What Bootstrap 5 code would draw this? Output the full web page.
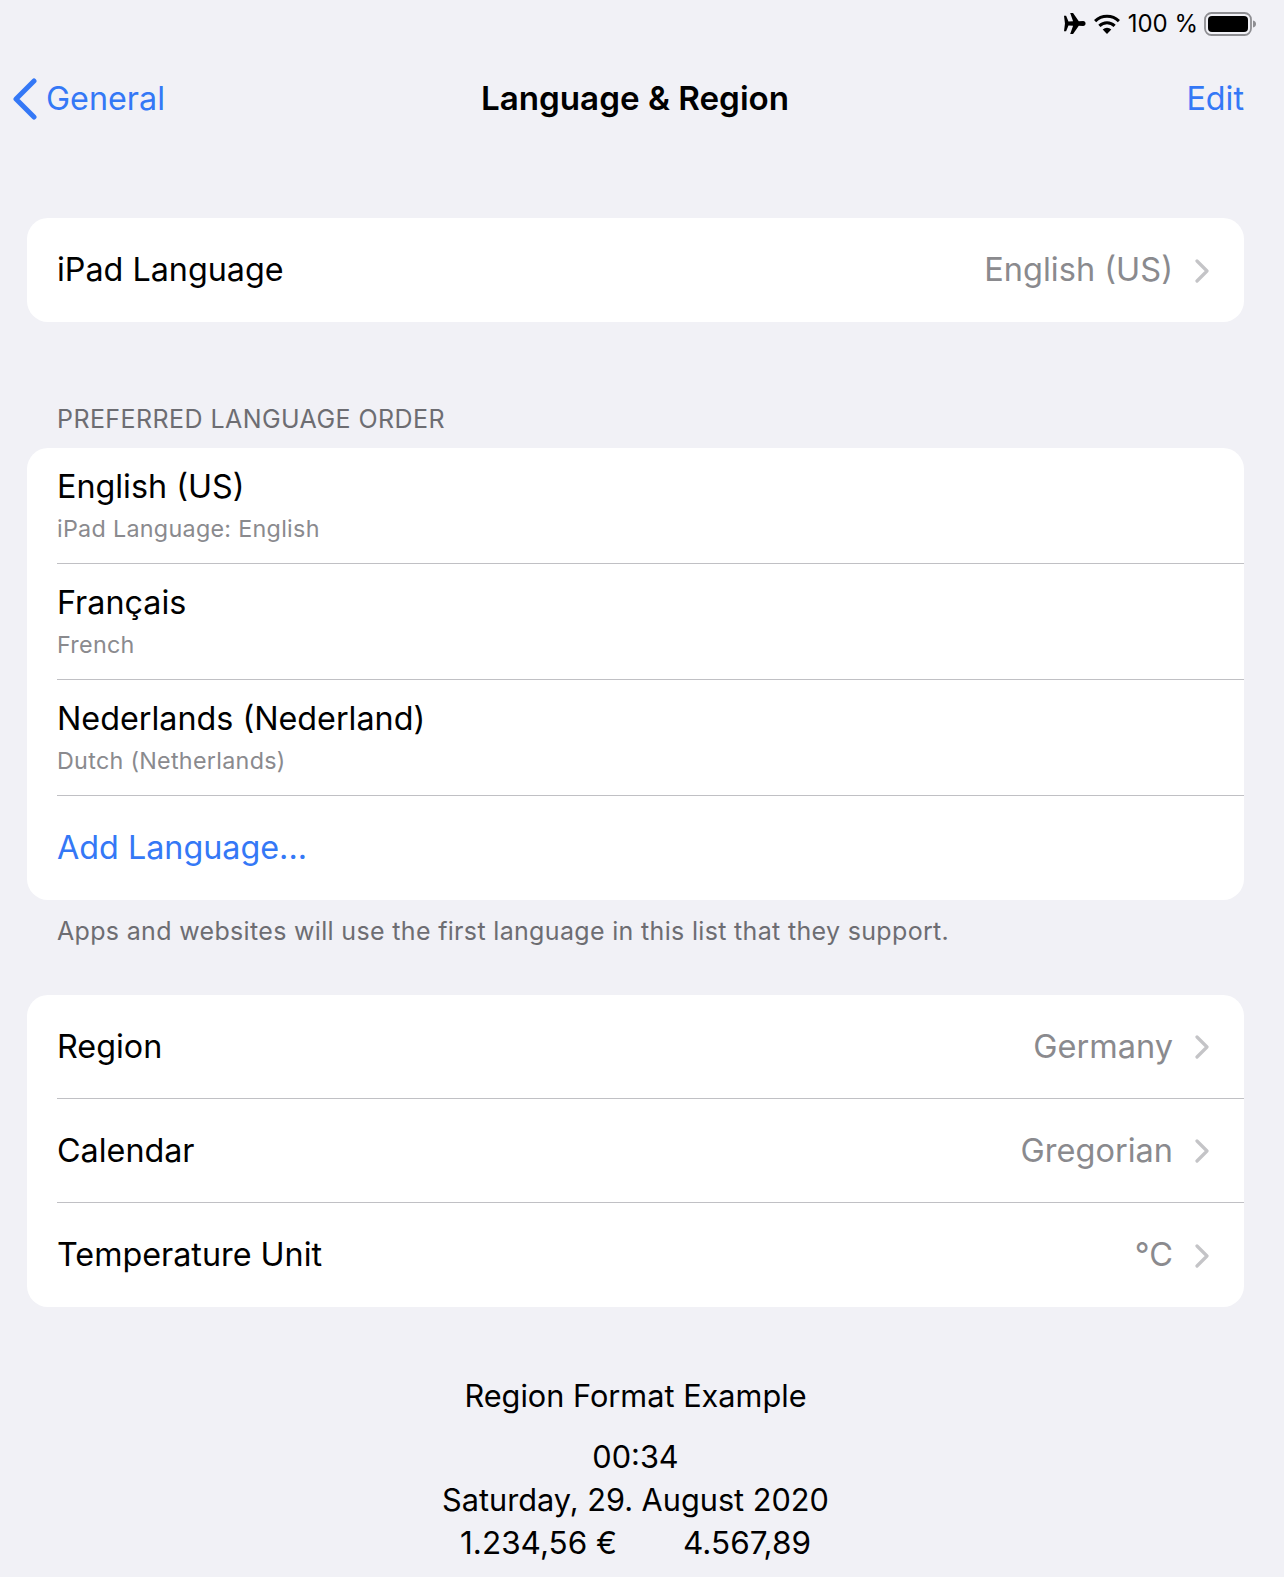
<!DOCTYPE html>
<html lang="en">

<head>
  <meta charset="UTF-8">
  <meta name="viewport" content="width=device-width, initial-scale=1.0">
  <title>Language &amp; Region</title>
  <link href="https://cdn.jsdelivr.net/npm/bootstrap@5.3.0/dist/css/bootstrap.min.css" rel="stylesheet">
  <style>
    html, body { height: 100%; }
    body { background: #f1f1f6; color: #000; font-family: Inter, "Liberation Sans", sans-serif; font-size: 32.3px; overflow: hidden; }
    .status-bar { height: 46px; padding: 1px 27px 0 0; font-size: 24px; line-height: 46px; gap: 7px; }
    .status-bar .batt-icon { margin-left: -1px; }
    .top-nav { height: 104px; padding: 2px 40px 0 12px; }
    .nav-left { width: 314px; }
    .nav-right { width: 300px; }
    .top-nav a, .blue-text { color: #3478f6; text-decoration: none; }
    .nav-title { font-weight: 600; font-size: 33.2px; }
    .back-link { gap: 9px; }
    .page-wrap { padding: 68px 40px 0 27px; }
    .group-box { background: #fff; border-radius: 21px; overflow: hidden; }
    .set-row { height: 104px; margin-left: 30px; padding: 1px 35px 0 0; }
    .set-row + .set-row, .lang-row + .lang-row, .lang-row + .add-row { border-top: 1px solid #c0c0c4; }
    .set-list .set-row:first-child { height: 103px; }
    .set-list .set-row:last-child { height: 105px; }
    .row-value { color: #8a8a8e; gap: 22px; font-size: 32.5px; }
    .lang-row { height: 116px; margin-left: 30px; padding-top: 17px; }
    .lang-row:first-child { height: 115px; }
    .lang-row .lang-sub { color: #8a8a8e; font-size: 23.3px; line-height: 30px; margin-top: 5px; letter-spacing: .3px; }
    .lang-row .lang-name { line-height: 44px; }
    .add-row { height: 105px; margin-left: 30px; }
    .group-label { color: #6d6d72; font-size: 25px; line-height: 30px; margin: 82px 0 14px 30px; letter-spacing: .43px; }
    .group-note { color: #6d6d72; font-size: 25px; line-height: 30px; margin: 16px 0 49px 30px; letter-spacing: .33px; }
    .format-box { margin-top: 67px; line-height: 43px; font-size: 30.7px; }
    .format-box .format-head { margin-bottom: 18px; }
    .format-nums { gap: 66px; font-size: 31.5px; }
  </style>
</head>

<body>
  <!-- status bar -->
  <div class="status-bar d-flex justify-content-end align-items-center">
    <svg width="23" height="21" viewBox="0 0 24 22"><path fill="#000" d="M1 3h2.200l2.500 5.800 4.800-.1L7.500 0h3l6 8.600 4.500-.1c1.600 0 2.600 1.100 2.600 2.500s-1 2.500-2.600 2.500l-4.500-.1-6 8.600h-3l3-8.700-4.800-.1L3.200 19H1l1-8z"/></svg>
    <svg width="28" height="20" viewBox="0 0 28 21"><g fill="none" stroke="#000" stroke-width="3.200"><path d="M1.500 7.500a18 18 0 0 1 25 0"/><path d="M6 12.500a11.500 11.500 0 0 1 16 0"/></g><path fill="#000" d="M9.500 16.200a6.500 6.500 0 0 1 9 0L14 21z"/></svg>
    <span>100 %</span>
    <svg class="batt-icon" width="53" height="24" viewBox="0 0 53 24"><rect x="1" y="1" width="46" height="22" rx="6.500" fill="none" stroke="#8e8e92" stroke-width="1.800"/><rect x="4" y="4" width="40" height="16" rx="4" fill="#000"/><path fill="#8e8e92" d="M49 8.500c2 .4 3 1.800 3 3.500s-1 3.100-3 3.500z"/></svg>
  </div>

  <!-- nav -->
  <nav class="top-nav d-flex justify-content-between align-items-center">
    <a href="#" class="nav-left back-link d-flex align-items-center">
      <svg width="25" height="42" viewBox="0 0 25 42"><path fill="none" stroke="#3478f6" stroke-width="5" stroke-linecap="round" stroke-linejoin="round" d="M22 3 4 21l18 18"/></svg>
      <span>General</span>
    </a>
    <div class="nav-title">Language &amp; Region</div>
    <div class="nav-right text-end"><a href="#">Edit</a></div>
  </nav>

  <div class="page-wrap">
    <div class="group-box">
      <div class="set-row d-flex justify-content-between align-items-center">
        <span>iPad Language</span>
        <span class="row-value d-flex align-items-center">English (US)
          <svg width="14" height="24" viewBox="0 0 14 24"><path fill="none" stroke="#c4c4c7" stroke-width="3.200" stroke-linecap="round" stroke-linejoin="round" d="m2 2 10 10L2 22"/></svg>
        </span>
      </div>
    </div>

    <div class="group-label">PREFERRED LANGUAGE ORDER</div>
    <div class="group-box">
      <div class="lang-row">
        <div class="lang-name">English (US)</div>
        <div class="lang-sub">iPad Language: English</div>
      </div>
      <div class="lang-row">
        <div class="lang-name">Français</div>
        <div class="lang-sub">French</div>
      </div>
      <div class="lang-row">
        <div class="lang-name">Nederlands (Nederland)</div>
        <div class="lang-sub">Dutch (Netherlands)</div>
      </div>
      <div class="add-row lang-row-add d-flex align-items-center blue-text">Add Language...</div>
    </div>
    <div class="group-note">Apps and websites will use the first language in this list that they support.</div>

    <div class="group-box set-list">
      <div class="set-row d-flex justify-content-between align-items-center">
        <span>Region</span>
        <span class="row-value d-flex align-items-center">Germany
          <svg width="14" height="24" viewBox="0 0 14 24"><path fill="none" stroke="#c4c4c7" stroke-width="3.200" stroke-linecap="round" stroke-linejoin="round" d="m2 2 10 10L2 22"/></svg>
        </span>
      </div>
      <div class="set-row d-flex justify-content-between align-items-center">
        <span>Calendar</span>
        <span class="row-value d-flex align-items-center">Gregorian
          <svg width="14" height="24" viewBox="0 0 14 24"><path fill="none" stroke="#c4c4c7" stroke-width="3.200" stroke-linecap="round" stroke-linejoin="round" d="m2 2 10 10L2 22"/></svg>
        </span>
      </div>
      <div class="set-row d-flex justify-content-between align-items-center">
        <span>Temperature Unit</span>
        <span class="row-value d-flex align-items-center">°C
          <svg width="14" height="24" viewBox="0 0 14 24"><path fill="none" stroke="#c4c4c7" stroke-width="3.200" stroke-linecap="round" stroke-linejoin="round" d="m2 2 10 10L2 22"/></svg>
        </span>
      </div>
    </div>

    <div class="format-box text-center">
      <div class="format-head">Region Format Example</div>
      <div>00:34</div>
      <div>Saturday, 29. August 2020</div>
      <div class="format-nums d-flex justify-content-center"><span>1.234,56 €</span><span>4.567,89</span></div>
    </div>
  </div>
</body>

</html>
